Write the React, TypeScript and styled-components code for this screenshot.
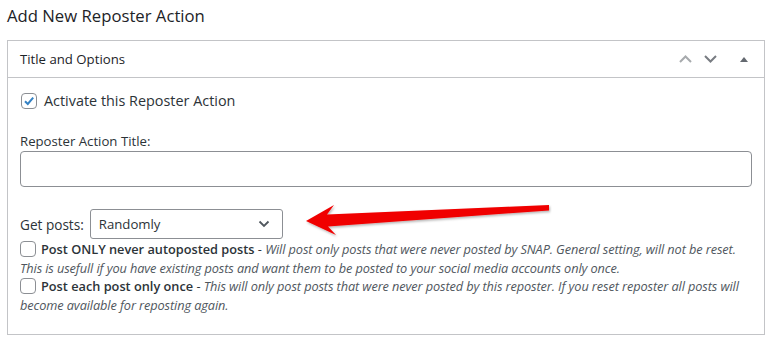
import React from "react";
import styled, { createGlobalStyle } from "styled-components";

const GlobalStyle = createGlobalStyle`
  body {
    margin: 0;
    background: #fff;
    font-family: "Open Sans", "Noto Sans", sans-serif;
    color: #1d2327;
  }
`;

const Page = styled.div`
  position: relative;
  padding: 4px 10px 0 7px;
  width: 774px;
  box-sizing: border-box;
`;

const Heading = styled.h1`
  margin: 0;
  font-size: 16.7px;
  font-weight: 400;
  line-height: 24px;
  color: #1d2327;
`;

const Box = styled.div`
  margin-top: 12px;
  border: 1px solid #c3c4c7;
  width: 758px;
  box-sizing: border-box;
  height: 295px;
`;

const BoxHeader = styled.div`
  display: flex;
  align-items: center;
  justify-content: space-between;
  height: 36px;
  padding: 0 12px;
  border-bottom: 1px solid #c3c4c7;
`;

const BoxTitle = styled.h2`
  margin: 0;
  font-size: 13.2px;
  font-weight: 400;
  color: #1d2327;
`;

const HeaderIcons = styled.div`
  display: flex;
  align-items: center;
  gap: 12px;
  margin-right: 2px;
`;

const IconBtn = styled.span<{ $color: string; $gap?: number }>`
  display: flex;
  width: 13px;
  justify-content: center;
  color: ${(p) => p.$color};
  margin-left: ${(p) => p.$gap ?? 0}px;
`;

const Body = styled.div`
  padding: 14px 12px 0 12px;
`;

const CheckRow = styled.label`
  display: flex;
  align-items: center;
  gap: 7px;
  font-size: 14.4px;
  line-height: 18px;
  color: #2c3338;
`;

const Check = styled.span<{ $checked?: boolean }>`
  flex: none;
  display: inline-flex;
  align-items: center;
  justify-content: center;
  width: 14px;
  height: 14px;
  border: 1px solid #8c8f94;
  border-radius: 4px;
  background: #fff;
  margin-left: ${(p) => (p.$checked ? "1px" : "0")};
`;

const Label = styled.div`
  margin-top: 22px;
  font-size: 13.2px;
  line-height: 18px;
  color: #2c3338;
`;

const TextInput = styled.input`
  display: block;
  margin-top: 1px;
  width: 732px;
  height: 36px;
  box-sizing: border-box;
  border: 1px solid #8c8f94;
  border-radius: 4px;
  background: #fff;
  outline: none;
`;

const SelectRow = styled.div`
  display: flex;
  align-items: center;
  gap: 6px;
  margin-top: 22px;
  font-size: 13.6px;
  color: #2c3338;
`;

const Select = styled.div`
  display: flex;
  align-items: center;
  justify-content: space-between;
  width: 193px;
  height: 30px;
  box-sizing: border-box;
  padding: 0 12px 0 8px;
  border: 1px solid #8c8f94;
  border-radius: 3px;
  font-size: 13.2px;
  color: #2c3338;
`;

const Options = styled.div`
  margin-top: 1px;
  display: flex;
  flex-direction: column;
`;

const Option = styled.div`
  font-size: 12.75px;
  line-height: 18.5px;
  color: #2c3338;
`;

const OptionHead = styled.span`
  display: inline-flex;
  align-items: center;
  gap: 5px;
  vertical-align: top;
`;

const Strong = styled.b`
  font-weight: 600;
`;

const Note = styled.i`
  color: #50575e;
  letter-spacing: -0.1px;
`;

const Arrow = styled.svg`
  position: absolute;
  left: 300px;
  top: 200px;
  overflow: visible;
`;

function Chevron({ up }: { up?: boolean }) {
  return (
    <svg width="13" height="8" viewBox="0 0 13 8">
      <path
        d={up ? "M1 7 L6.5 1.5 L12 7" : "M1 1 L6.5 6.5 L12 1"}
        fill="none"
        stroke="currentColor"
        strokeWidth="2"
      />
    </svg>
  );
}

function Tick() {
  return (
    <svg width="12" height="12" viewBox="0 0 12 12">
      <path d="M2 6.2 L4.8 9 L10.2 2.6" fill="none" stroke="#3582c4" strokeWidth="2" />
    </svg>
  );
}

function App() {
  return (
    <Page>
      <GlobalStyle />
      <Heading>Add New Reposter Action</Heading>
      <Box>
        <BoxHeader>
          <BoxTitle>Title and Options</BoxTitle>
          <HeaderIcons>
            <IconBtn $color="#a7aaad">
              <Chevron up />
            </IconBtn>
            <IconBtn $color="#787c82">
              <Chevron />
            </IconBtn>
            <IconBtn $color="#646970" $gap={8}>
              <svg width="8" height="5" viewBox="0 0 8 5">
                <path d="M0 5 L4 0 L8 5 Z" fill="currentColor" />
              </svg>
            </IconBtn>
          </HeaderIcons>
        </BoxHeader>
        <Body>
          <CheckRow>
            <Check $checked>
              <Tick />
            </Check>
            Activate this Reposter Action
          </CheckRow>
          <Label>Reposter Action Title:</Label>
          <TextInput />
          <SelectRow>
            Get posts:
            <Select>
              Randomly
              <svg width="12" height="8" viewBox="0 0 12 8">
                <path d="M1.5 1.5 L6 6 L10.5 1.5" fill="none" stroke="#50575e" strokeWidth="1.8" />
              </svg>
            </Select>
          </SelectRow>
          <Options>
            <Option>
              <OptionHead>
                <Check />
                <Strong>Post ONLY never autoposted posts</Strong>
              </OptionHead>{" "}
              - <Note>Will post only posts that were never posted by SNAP. General setting, will not be reset. This is usefull if you have existing posts and want them to be posted to your social media accounts only once.</Note>
            </Option>
            <Option>
              <OptionHead>
                <Check />
                <Strong>Post each post only once</Strong>
              </OptionHead>{" "}
              - <Note>This will only post posts that were never posted by this reposter. If you reset reposter all posts will become available for reposting again.</Note>
            </Option>
          </Options>
        </Body>
      </Box>
      <Arrow width="250" height="40" viewBox="300 200 250 40">
        <defs>
          <filter id="sh" x="-10%" y="-50%" width="120%" height="200%">
            <feDropShadow dx="1" dy="1.5" stdDeviation="1" floodColor="#000" floodOpacity="0.3" />
          </filter>
        </defs>
        <polygon
          points="306,221 334,205 327,214.5 549,205 549,210.5 328,226.5 336,235"
          fill="#f00000"
          filter="url(#sh)"
        />
      </Arrow>
    </Page>
  );
}

export default App;
